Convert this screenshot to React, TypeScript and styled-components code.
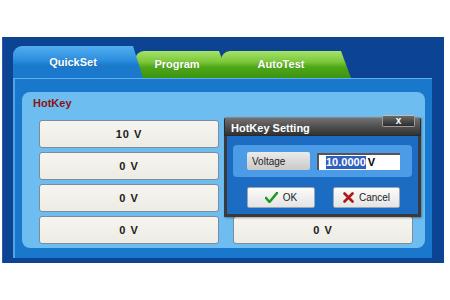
import React from "react";
import styled, { createGlobalStyle } from "styled-components";

const Global = createGlobalStyle`
  html, body { margin: 0; padding: 0; background: #ffffff; }
  body { font-family: "Liberation Sans", Arial, sans-serif; }
`;

const Frame = styled.div`
  margin: 37px 0 0 2px;
  width: 442px;
  height: 226px;
  box-sizing: border-box;
  background: #0c4393;
  border-left: 1px solid #2a5aa8;
  padding: 9px 12px 5px 10px;
  display: flex;
  flex-direction: column;
`;

const TabRow = styled.div`
  height: 32px;
  display: flex;
  align-items: flex-end;
`;

const Tab = styled.div<{ $active?: boolean; $w: number; $z: number }>`
  position: relative;
  z-index: ${(p) => p.$z};
  width: ${(p) => p.$w}px;
  height: ${(p) => (p.$active ? 32 : 27)}px;
  margin-left: ${(p) => (p.$active ? 0 : -8)}px;
  box-sizing: border-box;
  border-radius: 9px 9px 0 0;
  clip-path: polygon(0 0, calc(100% - 10px) 0, 100% 100%, 0 100%);
  background: ${(p) =>
    p.$active
      ? "linear-gradient(#52aef0 0%, #2c8ee0 45%, #1b7acc 60%, #1a78cc 100%)"
      : "linear-gradient(#a6e26a 0%, #7cc83a 40%, #4ea618 60%, #3c9410 100%)"};
  color: #ffffff;
  font-weight: bold;
  font-size: 11px;
  display: flex;
  align-items: center;
  justify-content: center;
  padding: 0 10px ${(p) => (p.$active ? 1 : 2)}px 0;
  text-shadow: 0 0 1px rgba(0, 0, 0, 0.25);
`;

const Panel = styled.div`
  flex: 1;
  background: #1a78cc;
  border-top: 1px solid #5eb0ee;
  border-left: 2px solid #4ea6e8;
  padding: 13px 7px 10px 7px;
  display: flex;
`;

const Inner = styled.div`
  position: relative;
  flex: 1;
  background: #6dbdf0;
  border-radius: 8px;
  padding: 4px 0 0 11px;
  display: flex;
  flex-direction: column;
`;

const Heading = styled.div`
  color: #8a1414;
  font-weight: bold;
  font-size: 11px;
  height: 14px;
  line-height: 14px;
  margin-bottom: 10px;
`;

const KeyGrid = styled.div`
  display: grid;
  grid-template-columns: 180px 180px;
  grid-auto-rows: 28px;
  column-gap: 14px;
  row-gap: 4px;
  margin-left: 6px;
`;

const KeyButton = styled.div`
  box-sizing: border-box;
  background: linear-gradient(#f6f5f0, #ecebe4);
  border: 1px solid #7d8b9a;
  border-radius: 3px;
  display: flex;
  align-items: center;
  justify-content: center;
  font-weight: bold;
  font-size: 11px;
  color: #1a1a1a;
  letter-spacing: 1px;
`;

const Dialog = styled.div`
  position: absolute;
  left: 202px;
  top: 25px;
  width: 197px;
  height: 100px;
  display: flex;
  flex-direction: column;
  box-shadow: 1px 1px 2px rgba(0, 0, 0, 0.35);
`;

const TitleBar = styled.div`
  height: 19px;
  box-sizing: border-box;
  background: linear-gradient(#727272 0%, #505050 50%, #323232 100%);
  border: 1px solid #2a2a2a;
  border-top-color: #8a8a8a;
  border-radius: 3px 3px 0 0;
  color: #ffffff;
  font-weight: bold;
  font-size: 11px;
  display: flex;
  align-items: center;
  padding: 2px 0 0 6px;
`;

const CloseBtn = styled.div`
  position: absolute;
  right: 6px;
  top: -2px;
  width: 33px;
  height: 12px;
  box-sizing: border-box;
  background: linear-gradient(#6a6a6a, #2c2c2c);
  border: 1px solid #9a9a9a;
  border-top-color: #bdbdbd;
  border-radius: 2px;
  color: #ffffff;
  font-weight: bold;
  font-size: 10px;
  line-height: 9px;
  text-align: center;
`;

const Body = styled.div`
  flex: 1;
  background: #1b6cc2;
  border: 3px solid #3a3a3a;
  border-top: none;
  padding: 9px 6px 0 6px;
  display: flex;
  flex-direction: column;
`;

const FieldBox = styled.div`
  height: 32px;
  box-sizing: border-box;
  background: #4b9be6;
  border-radius: 4px;
  display: flex;
  align-items: center;
  padding-left: 14px;
  gap: 7px;
`;

const FieldLabel = styled.div`
  width: 63px;
  height: 18px;
  box-sizing: border-box;
  background: linear-gradient(#ebebeb, #c9c9c9);
  border-radius: 2px;
  font-size: 10px;
  color: #222;
  display: flex;
  align-items: center;
  padding-left: 5px;
`;

const Input = styled.div`
  width: 83px;
  height: 17px;
  box-sizing: border-box;
  background: #ffffff;
  border-top: 2px solid #555;
  border-left: 2px solid #555;
  display: flex;
  align-items: center;
  gap: 2px;
  padding-left: 7px;
  font-size: 11px;
  line-height: 13px;
`;

const Selected = styled.span`
  background: #2f5fbf;
  color: #ffffff;
  font-weight: bold;
`;

const Unit = styled.span`
  color: #000;
  font-weight: bold;
`;

const ActionRow = styled.div`
  display: flex;
  gap: 18px;
  margin-top: 10px;
  padding-left: 14px;
`;

const ActionBtn = styled.div<{ $w: number }>`
  width: ${(p) => p.$w}px;
  height: 21px;
  box-sizing: border-box;
  background: linear-gradient(#fbfbfb, #e4e4e4);
  border: 1px solid #9aa6b2;
  border-radius: 2px;
  display: flex;
  align-items: center;
  justify-content: center;
  gap: 5px;
  font-size: 10px;
  color: #222;
`;

const Check = () => (
  <svg width="13" height="11" viewBox="0 0 13 11">
    <path d="M1 6 L4.5 10 L12 1" fill="none" stroke="#1f9a1f" strokeWidth="2.6" strokeLinecap="round" strokeLinejoin="round" />
  </svg>
);

const Cross = () => (
  <svg width="11" height="11" viewBox="0 0 11 11">
    <path d="M1.5 1.5 L9.5 9.5 M9.5 1.5 L1.5 9.5" fill="none" stroke="#b01818" strokeWidth="2.6" strokeLinecap="round" />
  </svg>
);

const keys = ["10 V", "0 V", "0 V", "0 V", "0 V", "0 V", "0 V", "0 V"];

export default function App() {
  const order = [0, 4, 1, 5, 2, 6, 3, 7];
  return (
    <>
      <Global />
      <Frame>
        <TabRow>
          <Tab $active $w={130} $z={3}>QuickSet</Tab>
          <Tab $w={94} $z={2}>Program</Tab>
          <Tab $w={130} $z={1}>AutoTest</Tab>
        </TabRow>
        <Panel>
          <Inner>
            <Heading>HotKey</Heading>
            <KeyGrid>
              {order.map((i) => (
                <KeyButton key={i}>{keys[i]}</KeyButton>
              ))}
            </KeyGrid>
            <Dialog>
              <TitleBar>HotKey Setting</TitleBar>
              <CloseBtn>x</CloseBtn>
              <Body>
                <FieldBox>
                  <FieldLabel>Voltage</FieldLabel>
                  <Input>
                    <Selected>10.0000</Selected>
                    <Unit>V</Unit>
                  </Input>
                </FieldBox>
                <ActionRow>
                  <ActionBtn $w={68}>
                    <Check />
                    OK
                  </ActionBtn>
                  <ActionBtn $w={67}>
                    <Cross />
                    Cancel
                  </ActionBtn>
                </ActionRow>
              </Body>
            </Dialog>
          </Inner>
        </Panel>
      </Frame>
    </>
  );
}
